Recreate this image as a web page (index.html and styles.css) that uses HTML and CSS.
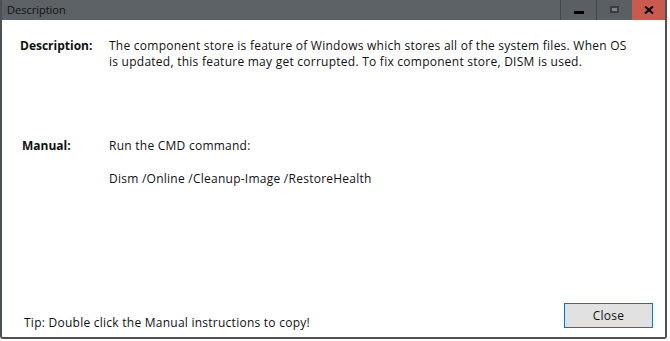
FILE: index.html
```html
<!DOCTYPE html>
<html lang="en">
<head>
<meta charset="utf-8">
<title>Description</title>
<link rel="stylesheet" href="styles.css">
</head>
<body>
<div class="window">
  <div class="titlebar">
    <div class="title">Description</div>
    <div class="controls">
      <div class="ctl ctl-min"><span class="min-glyph"></span></div>
      <div class="ctl ctl-max"><span class="max-glyph"></span></div>
      <div class="ctl ctl-close">
        <svg width="10" height="8" viewBox="0 0 10 8"><path d="M1 0.5 L9 7.5 M9 0.5 L1 7.5" stroke="#000" stroke-width="2"/></svg>
      </div>
    </div>
  </div>
  <div class="content">
    <div class="row row-desc">
      <div class="label">Description:</div>
      <div class="value">The component store is feature of Windows which stores all of the system files. When OS<br>is updated, this feature may get corrupted. To fix component store, DISM is used.</div>
    </div>
    <div class="row row-manual">
      <div class="label label-manual">Manual:</div>
      <div class="value">
        <p class="para">Run the CMD command:</p>
        <p class="para para-cmd">Dism /Online /Cleanup-Image /RestoreHealth</p>
      </div>
    </div>
    <div class="footer">
      <div class="tip">Tip: Double click the Manual instructions to copy!</div>
      <button class="btn">Close</button>
    </div>
  </div>
</div>
</body>
</html>
```
FILE: styles.css
```css
html, body {
  margin: 0;
  padding: 0;
  background: #ffffff;
}
body {
  font-family: "Open Sans", "Noto Sans", sans-serif;
  font-size: 12px;
  line-height: 16px;
  color: #111;
}
.window {
  width: 667px;
  height: 339px;
  box-sizing: border-box;
  border: 2px solid #4c5156;
  border-top: 0;
  border-radius: 0 0 3px 3px;
  display: flex;
  flex-direction: column;
  background: #ffffff;
}
.titlebar {
  height: 20px;
  flex: none;
  background: #5c6166;
  display: flex;
  align-items: stretch;
}
.title {
  flex: 1;
  font-size: 11px;
  line-height: 20px;
  padding-left: 5px;
  color: #101214;
}
.controls {
  display: flex;
}
.ctl {
  display: flex;
  align-items: center;
  justify-content: center;
  height: 20px;
  box-sizing: border-box;
}
.ctl-min, .ctl-max {
  width: 36px;
  border-left: 1px solid #43474b;
  background: #5a5f64;
}
.ctl-close {
  width: 33px;
  background: #c95a4e;
}
.min-glyph {
  display: block;
  width: 10px;
  height: 3px;
  background: #000;
  margin-top: 5px;
}
.max-glyph {
  display: block;
  width: 9px;
  height: 7px;
  box-sizing: border-box;
  border: 2px solid #3a3d41;
  background: #7d8287;
  margin-top: -1px;
}
.content {
  flex: 1;
  display: flex;
  flex-direction: column;
  letter-spacing: 0.25px;
}
.row {
  display: flex;
  padding-left: 18px;
}
.row-desc {
  margin-top: 18px;
}
.row-manual {
  margin-top: 68px;
}
.label {
  width: 89px;
  flex: none;
  font-weight: 700;
  letter-spacing: 0;
}
.label-manual {
  padding-left: 2px;
  width: 87px;
}
.value {
  flex: 1;
}
.para {
  margin: 0;
}
.para-cmd {
  margin-top: 17px;
}
.footer {
  margin-top: auto;
  display: flex;
  justify-content: space-between;
  align-items: flex-end;
  padding: 0 12px 6px 22px;
}
.btn {
  width: 89px;
  height: 25px;
  box-sizing: border-box;
  margin-bottom: 3px;
  border: 1px solid #0078d7;
  background: #e1e1e1;
  font-family: "Open Sans", "Noto Sans", sans-serif;
  font-size: 12px;
  letter-spacing: 0.25px;
  color: #111;
  padding: 1px 0 0;
  line-height: 16px;
}
```
